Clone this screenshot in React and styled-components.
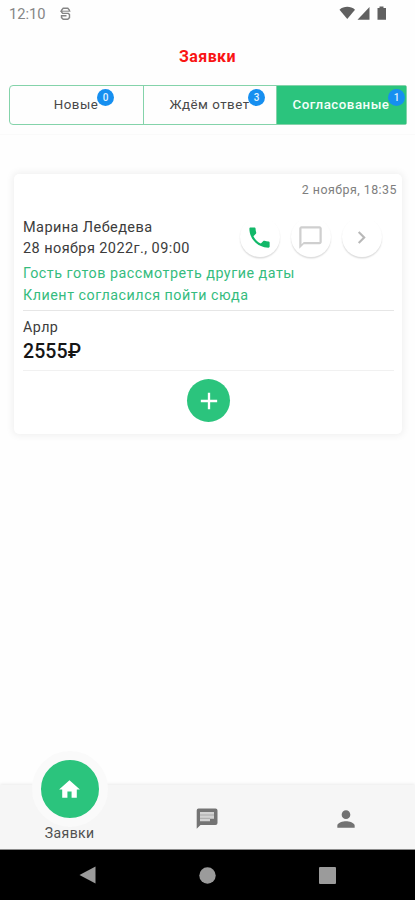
import React, { useState } from 'react';
import styled, { createGlobalStyle } from 'styled-components';
import {
  MdPhone,
  MdChatBubbleOutline,
  MdChevronRight,
  MdAdd,
  MdHome,
  MdPerson,
} from 'react-icons/md';

const GREEN = '#2bc47d';

const GlobalStyle = createGlobalStyle`
  * {
    box-sizing: border-box;
  }

  body {
    margin: 0;
    background: #fefefe;
    font-family: Roboto, 'Liberation Sans', sans-serif;
  }

  button {
    font: inherit;
    padding: 0;
    cursor: pointer;
  }

  svg {
    display: block;
    flex-shrink: 0;
  }
`;

const Screen = styled.div`
  display: flex;
  flex-direction: column;
  height: 900px;
  overflow: hidden;
  background: #fefefe;
  color: #3c3c3c;
`;

// Status bar
const StatusBar = styled.div`
  display: flex;
  align-items: center;
  height: 28px;
  padding: 0 28px 0 9px;
  color: #858585;
`;

const Clock = styled.span`
  width: 51px;
  padding-top: 1px;
  font-size: 14.7px;
  line-height: 27px;
`;

const StatusIcons = styled.div`
  display: flex;
  align-items: center;
  margin-left: auto;
`;

// Header and tabs
const Header = styled.header`
  height: 57px;
  text-align: center;
`;

const Title = styled.h1`
  margin: 0;
  font-size: 16px;
  font-weight: 700;
  letter-spacing: 0.4px;
  line-height: 57px;
  color: #f91414;
`;

const TabsWrap = styled.div`
  height: 50px;
  padding: 0 8px 0 9px;
  border-bottom: 1px solid #fafafa;
`;

const Tabs = styled.nav`
  display: grid;
  grid-template-columns: 134px 133px 1fr;
  height: 40px;
  border: 1px solid #84d3aa;
  border-radius: 4px 2px 2px 4px;
`;

const Tab = styled.button`
  position: relative;
  padding-right: 1px;
  border: 0;
  border-right: ${props => (props.$last ? '0' : '1px solid #84d3aa')};
  background: ${props => (props.$active ? GREEN : 'transparent')};
  color: ${props => (props.$active ? '#f4fff9' : '#484848')};
  font-size: 13.3px;
  font-weight: ${props => (props.$active ? 500 : 400)};
  letter-spacing: ${props => (props.$active ? 0.5 : 0.5)}px;
  line-height: 36px;
`;

const Badge = styled.span`
  position: absolute;
  top: 3px;
  right: ${props => props.$right}px;
  width: 17px;
  height: 17px;
  border-radius: 50%;
  background: #168ff0;
  color: #e2f2ff;
  font-size: 10px;
  font-weight: 500;
  letter-spacing: 0;
  line-height: 17px;
  text-align: center;
`;

// Request card
const Content = styled.main`
  flex: 1;
  padding: 39px 13px 0 14px;
`;

const Card = styled.article`
  height: 260px;
  padding: 0 8px 0 9px;
  border-radius: 5px;
  background: #fff;
  box-shadow: 0 0 7px 2px rgba(0, 0, 0, 0.055);
`;

const Created = styled.div`
  height: 30px;
  margin-right: -3px;
  font-size: 12.4px;
  letter-spacing: 0.48px;
  line-height: 31px;
  text-align: right;
  color: #7e7e7e;
`;

const Guest = styled.div`
  display: flex;
  justify-content: space-between;
  height: 59px;
  padding: 13px 12.5px 0 0;
`;

const GuestInfo = styled.div`
  font-size: 14.5px;
  line-height: 21px;
  letter-spacing: 0.42px;
`;

const Actions = styled.div`
  display: flex;
  gap: 11px;
`;

const RoundButton = styled.button`
  display: flex;
  align-items: center;
  justify-content: center;
  width: 40px;
  height: 40px;
  border: 0;
  border-radius: 50%;
  background: #fff;
  color: ${props => props.$color};
  box-shadow: 0 1.5px 1.5px rgba(0, 0, 0, 0.14);
`;

const Notes = styled.div`
  height: 47px;
  font-size: 14.3px;
  letter-spacing: 0.52px;
  line-height: 21.5px;
  color: #35bc7e;
`;

const Order = styled.div`
  height: 61px;
  padding-top: 6px;
  border-top: 1px solid #e6e6e6;
  border-bottom: 1px solid #f1f1f1;
`;

const OrderName = styled.div`
  font-size: 14.3px;
  letter-spacing: 0.45px;
  line-height: 21px;
`;

const Price = styled.div`
  font-size: 19.5px;
  font-weight: 500;
  letter-spacing: 0.1px;
  line-height: 27px;
  color: #161616;
`;

const AddButton = styled.button`
  display: flex;
  align-items: center;
  justify-content: center;
  width: 43px;
  height: 43px;
  margin: 8px auto 0;
  border: 0;
  border-radius: 50%;
  background: ${GREEN};
  color: #fff;
`;

// Bottom menu
const BottomMenu = styled.nav`
  display: grid;
  grid-template-columns: repeat(3, 1fr);
  height: 64px;
  background: #f6f6f6;
  box-shadow: 0 -1px 3px rgba(0, 0, 0, 0.08);
`;

const MenuItem = styled.button`
  display: flex;
  flex-direction: column;
  align-items: center;
  justify-content: center;
  padding-top: 3px;
  border: 0;
  background: transparent;
  color: #727272;
`;

const HomeItem = styled(MenuItem)`
  justify-content: flex-start;
  padding: 0 0 0 1px;
  color: #505050;
  font-size: 14px;
  letter-spacing: 0.45px;
`;

const HomeCircle = styled.span`
  display: flex;
  align-items: center;
  justify-content: center;
  width: 76px;
  height: 76px;
  margin-top: -34px;
  border: 9px solid #fafafa;
  border-radius: 50%;
  background: ${GREEN};
  color: #fff;
`;

const HomeLabel = styled.span`
  margin-top: -2px;
  line-height: 16px;
`;

// System navigation
const SystemBar = styled.div`
  display: flex;
  align-items: center;
  justify-content: space-between;
  height: 51px;
  padding: 0 79px;
  border-top: 1px solid #8c8c8c;
  background: #000;
`;

const tabs = [
  { name: 'Новые', count: 0, right: 29 },
  { name: 'Ждём ответ', count: 3, right: 11 },
  { name: 'Согласованые', count: 1, right: 1 },
];

const ChatIcon = () => (
  <svg width="22" height="22" viewBox="0 0 22 22" fill="#747474">
    <path d="M2.5 0.5H19.5Q21.5 0.5 21.5 2.5V15Q21.5 17 19.5 17H4.5L0.7 20.8V2.5Q0.7 0.5 2.5 0.5Z" />
    <path d="M4 4H18V10.8H14V13.3H4Z" fill="#d2d2d2" />
    <path d="M4 7H18M4 10.3H14" stroke="#a8a8a8" strokeWidth="1" />
  </svg>
);

const App = () => {
  const [active, setActive] = useState(2);

  return (
    <Screen>
      <GlobalStyle />
      <StatusBar>
        <Clock>12:10</Clock>
        <svg width="11" height="14" viewBox="0 0 11 14" fill="none" stroke="currentColor" strokeWidth="1.4">
          <path d="M9.3 4V3L7.8 1.3H3.2L1.7 3V5.2L2.7 6.4H8.3L9.5 7.6V10.6L7.8 12.3H3.2L1.5 10.6V8.8H6.5" />
          <path d="M0 4.2H10.5" strokeWidth="1" />
        </svg>
        <StatusIcons>
          <svg width="48" height="16" viewBox="0 0 48 16" fill="#606060">
            <path d="M0.5 3.7C5 -0.1 11.5 -0.1 16 3.7L8.25 13Z" />
            <path d="M18.5 13.7L30.5 1V13.7Z" />
            <path d="M38.5 2H40.5V0.5H44.5V2H47V13.7H38.5Z" />
          </svg>
        </StatusIcons>
      </StatusBar>

      <Header>
        <Title>Заявки</Title>
      </Header>

      <TabsWrap>
        <Tabs>
          {tabs.map((tab, i) => (
            <Tab
              key={tab.name}
              $active={active === i}
              $last={i === tabs.length - 1}
              onClick={() => setActive(i)}
            >
              {tab.name}
              <Badge $right={tab.right}>{tab.count}</Badge>
            </Tab>
          ))}
        </Tabs>
      </TabsWrap>

      <Content>
        <Card>
          <Created>2 ноября, 18:35</Created>
          <Guest>
            <GuestInfo>
              <div>Марина Лебедева</div>
              <div>28 ноября 2022г., 09:00</div>
            </GuestInfo>
            <Actions>
              <RoundButton $color="#12b869"><MdPhone size={27} /></RoundButton>
              <RoundButton $color="#cfcfcf"><MdChatBubbleOutline size={27} /></RoundButton>
              <RoundButton $color="#b8b8b8"><MdChevronRight size={25} /></RoundButton>
            </Actions>
          </Guest>
          <Notes>
            <div>Гость готов рассмотреть другие даты</div>
            <div>Клиент согласился пойти сюда</div>
          </Notes>
          <Order>
            <OrderName>Арлр</OrderName>
            <Price>2555₽</Price>
          </Order>
          <AddButton><MdAdd size={28} /></AddButton>
        </Card>
      </Content>

      <BottomMenu>
        <HomeItem>
          <HomeCircle><MdHome size={25} /></HomeCircle>
          <HomeLabel>Заявки</HomeLabel>
        </HomeItem>
        <MenuItem><ChatIcon /></MenuItem>
        <MenuItem><MdPerson size={26} /></MenuItem>
      </BottomMenu>

      <SystemBar>
        <svg width="17" height="18" viewBox="0 0 17 18" fill="#9b9b9b">
          <path d="M16.5 0.5V17.5L0.5 9Z" />
        </svg>
        <svg width="17" height="17" viewBox="0 0 17 17" fill="#9b9b9b">
          <circle cx="8.5" cy="8.5" r="8.2" />
        </svg>
        <svg width="17" height="17" viewBox="0 0 17 17" fill="#9b9b9b">
          <rect width="17" height="17" rx="1" />
        </svg>
      </SystemBar>
    </Screen>
  );
};

export default App;
